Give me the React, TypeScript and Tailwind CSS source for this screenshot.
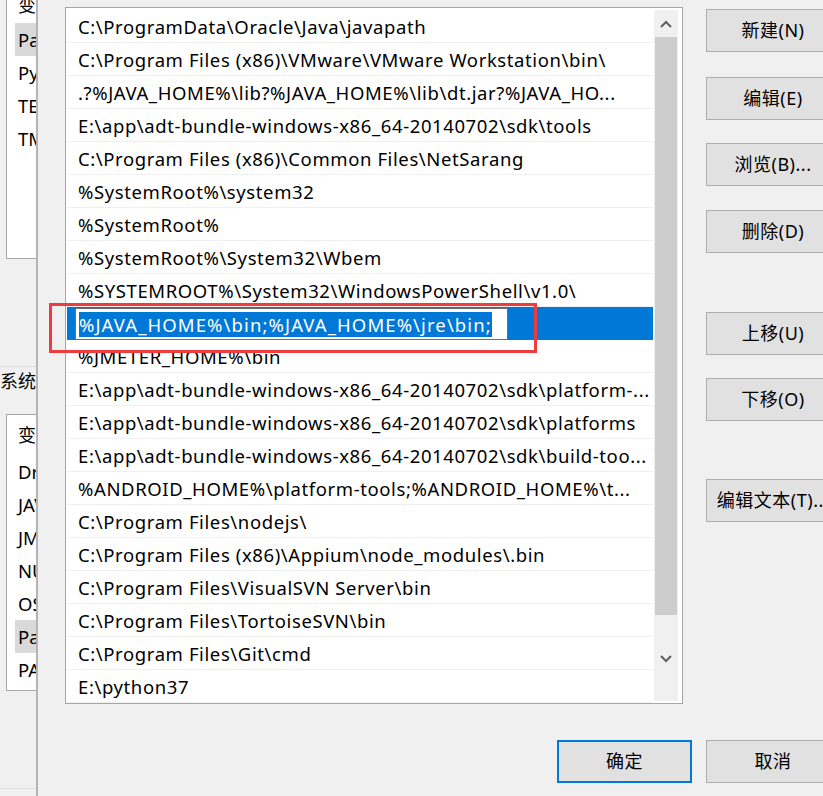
const paths = [
  "C:\\ProgramData\\Oracle\\Java\\javapath",
  "C:\\Program Files (x86)\\VMware\\VMware Workstation\\bin\\",
  ".?%JAVA_HOME%\\lib?%JAVA_HOME%\\lib\\dt.jar?%JAVA_HO...",
  "E:\\app\\adt-bundle-windows-x86_64-20140702\\sdk\\tools",
  "C:\\Program Files (x86)\\Common Files\\NetSarang",
  "%SystemRoot%\\system32",
  "%SystemRoot%",
  "%SystemRoot%\\System32\\Wbem",
  "%SYSTEMROOT%\\System32\\WindowsPowerShell\\v1.0\\",
  "%JAVA_HOME%\\bin;%JAVA_HOME%\\jre\\bin;",
  "%JMETER_HOME%\\bin",
  "E:\\app\\adt-bundle-windows-x86_64-20140702\\sdk\\platform-...",
  "E:\\app\\adt-bundle-windows-x86_64-20140702\\sdk\\platforms",
  "E:\\app\\adt-bundle-windows-x86_64-20140702\\sdk\\build-too...",
  "%ANDROID_HOME%\\platform-tools;%ANDROID_HOME%\\t...",
  "C:\\Program Files\\nodejs\\",
  "C:\\Program Files (x86)\\Appium\\node_modules\\.bin",
  "C:\\Program Files\\VisualSVN Server\\bin",
  "C:\\Program Files\\TortoiseSVN\\bin",
  "C:\\Program Files\\Git\\cmd",
  "E:\\python37",
];

const SELECTED = 9;

function Chevron({ up }: { up?: boolean }) {
  return (
    <svg width="12" height="8" viewBox="0 0 12 8">
      <polyline
        points={up ? "1,7 6,2 11,7" : "1,1 6,6 11,1"}
        fill="none"
        stroke="#606060"
        strokeWidth="2"
      />
    </svg>
  );
}

function Btn({ label, primary }: { label: string; primary?: boolean }) {
  return (
    <div
      className={
        "h-[43px] shrink-0 flex items-center justify-center bg-[#e1e1e1] text-[18px] tracking-[0.5px] text-black whitespace-nowrap " +
        (primary ? "w-[135px] border-2 border-[#0078d7]" : "w-[134px] border border-[#adadad]")
      }
    >
      {label}
    </div>
  );
}

function SideRow({ text, active }: { text: string; active?: boolean }) {
  return (
    <div className={"h-[33px] flex items-center pl-[3px] text-[18.5px] overflow-hidden whitespace-nowrap " + (active ? "bg-[#d9d9d9]" : "")}>
      {text}
    </div>
  );
}

export default function App() {
  return (
    <div
      className="relative w-[823px] h-[796px] overflow-hidden bg-[#f0f0f0] flex text-black"
      style={{ fontFamily: '"Noto Sans", "Noto Sans CJK SC", sans-serif' }}
    >
      {/* background window, mostly hidden */}
      <div className="w-[36px] shrink-0 overflow-hidden">
        <div className="w-[120px] flex flex-col">
          <div className="ml-[6px] -mt-[14px] h-[273px] border border-[#a6a6a6] bg-white pl-[8px]">
            <div className="h-[36px] flex items-center pl-[3px] text-[18px]">变量</div>
            <SideRow text="Path" active />
            <SideRow text="PyCharm" />
            <SideRow text="TEMP" />
            <SideRow text="TMP" />
          </div>
          <div className="mt-[107px] border-t border-[#dcdcdc]" />
          <div className="mt-[2px] h-[24px] flex items-center text-[18px] whitespace-nowrap overflow-hidden">系统变量(S)</div>
          <div className="mt-[21px] ml-[6px] h-[277px] border border-[#a6a6a6] bg-white pl-[8px]">
            <div className="h-[40px] flex items-center pl-[3px] text-[18px]">变量</div>
            <SideRow text="DriverData" />
            <SideRow text="JAVA_HOME" />
            <SideRow text="JMETER_HOME" />
            <SideRow text="NUMBER_OF_PROCESSORS" />
            <SideRow text="OS" />
            <SideRow text="Path" active />
            <SideRow text="PATHEXT" />
          </div>
          <div className="mt-[97px] border-t border-[#dcdcdc]" />
        </div>
      </div>

      {/* edit environment variable dialog */}
      <div className="w-[800px] shrink-0 border-l-2 border-[#b4b4b4] pl-[27px] pt-[7px] flex flex-col">
        <div className="flex">
          <div className="w-[618px] h-[697px] shrink-0 border border-[#a6a6a6] bg-white flex pl-[1px] pt-[2px] overflow-hidden">
            <div className="w-[586px] shrink-0 flex flex-col">
              {paths.map((p, i) =>
                i === SELECTED ? (
                  <div key={i} className="h-[33px] shrink-0 bg-[#0078d7] flex items-center pl-[8px]">
                    <div className="w-[433px] h-[32px] bg-white border border-[#6e6e6e] flex items-center pl-[3px] pt-[1px]">
                      <span className="bg-[#0078d7] text-white text-[18.5px] tracking-[1.1px] leading-[25px] whitespace-nowrap">{p}</span>
                    </div>
                  </div>
                ) : (
                  <div
                    key={i}
                    className="h-[33px] shrink-0 border-b border-[#f0f0f0] flex items-center pl-[11px] pt-[2px] text-[18.5px] tracking-[0.6px] whitespace-nowrap overflow-hidden"
                  >
                    {p}
                  </div>
                )
              )}
            </div>
            <div className="ml-[1px] w-[24px] h-[691px] shrink-0 bg-[#f0f0f0] flex flex-col">
              <div className="h-[27px] flex items-center justify-center">
                <Chevron up />
              </div>
              <div className="h-[578px] mx-[1px] bg-[#cdcdcd]" />
              <div className="flex-1 flex items-center justify-center pt-[2px]">
                <Chevron />
              </div>
            </div>
          </div>

          <div className="ml-[23px] flex flex-col pt-[2px]">
            <Btn label="新建(N)" />
            <div className="mt-[25px]"><Btn label="编辑(E)" /></div>
            <div className="mt-[23px]"><Btn label="浏览(B)..." /></div>
            <div className="mt-[24px]"><Btn label="删除(D)" /></div>
            <div className="mt-[59px]"><Btn label="上移(U)" /></div>
            <div className="mt-[23px]"><Btn label="下移(O)" /></div>
            <div className="mt-[58px]"><Btn label="编辑文本(T)..." /></div>
          </div>
        </div>

        <div className="mt-[36px] w-[775px] flex justify-end gap-[14px]">
          <Btn label="确定" primary />
          <Btn label="取消" />
        </div>
      </div>

      {/* red annotation box */}
      <div className="absolute left-[49px] top-[303px] w-[488px] h-[50px] border-[3px] border-[#ee3b3b]" />
    </div>
  );
}
